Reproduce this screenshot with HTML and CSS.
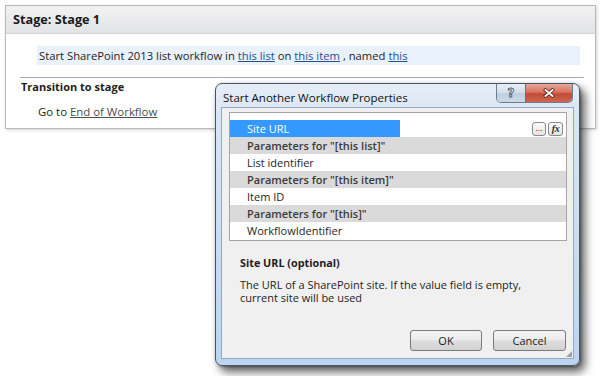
FILE: index.html
```html
<!DOCTYPE html>
<html>
<head>
<meta charset="utf-8">
<link rel="stylesheet" href="styles.css">
</head>
<body>
<div class="stage">
  <div class="stage-head">Stage: Stage 1</div>
  <div class="stage-body">
    <div class="action">Start SharePoint 2013 list workflow in <span class="link">this list</span> on <span class="link">this item</span> , named <span class="link">this</span></div>
    <div class="sep"></div>
    <div class="trans-title">Transition to stage</div>
    <div class="goto">Go to <span class="link gray">End of Workflow</span></div>
  </div>
</div>

<div class="dialog">
  <div class="titlebar">
    <span class="title">Start Another Workflow Properties</span>
    <div class="capbtns">
      <div class="cap help">?</div>
      <div class="cap close">
        <svg width="14" height="10" viewBox="0 0 14 10">
          <path d="M3.5 2 L10.5 8 M10.5 2 L3.5 8" stroke="#6a2a1e" stroke-width="3.6" stroke-linecap="square" fill="none"/>
          <path d="M3.5 2 L10.5 8 M10.5 2 L3.5 8" stroke="#ffffff" stroke-width="1.8" stroke-linecap="square" fill="none"/>
        </svg>
      </div>
    </div>
  </div>
  <div class="client">
    <div class="grid">
      <div class="row selrow">
        <div class="name sel">Site URL</div>
        <div class="value">
          <span class="mini">...</span>
          <span class="mini fx">fx</span>
        </div>
      </div>
      <div class="row group">Parameters for "[this list]"</div>
      <div class="row">List identifier</div>
      <div class="row group">Parameters for "[this item]"</div>
      <div class="row">Item ID</div>
      <div class="row group">Parameters for "[this]"</div>
      <div class="row">WorkflowIdentifier</div>
    </div>
    <div class="help-title">Site URL (optional)</div>
    <div class="help-text">
      <div class="line">The URL of a SharePoint site. If the value field is empty,</div>
      <div class="line">current site will be used</div>
    </div>
    <div class="buttons">
      <div class="btn ok">OK</div>
      <div class="btn cancel">Cancel</div>
    </div>
    <div class="grip"></div>
  </div>
</div>
</body>
</html>
```

FILE: styles.css
```css
* { box-sizing: border-box; }
html, body { margin: 0; padding: 0; }
body {
  width: 602px;
  height: 376px;
  background: #ffffff;
  position: relative;
  overflow: hidden;
  font-family: "Open Sans", "Noto Sans", sans-serif;
  font-size: 11px;
  color: #1e1e1e;
}

/* ---------- Stage card ---------- */
.stage {
  margin: 5px 0 0 5px;
  width: 591px;
  height: 124px;
  border: 1px solid #b9b9b9;
  box-shadow: 1px 1px 3px rgba(0,0,0,0.18);
  background: #fff;
}
.stage-head {
  height: 28px;
  background: linear-gradient(#f2f2f3, #e2e3e5);
  border-bottom: 1px solid #d3d4d6;
  font-weight: bold;
  font-size: 12.7px;
  line-height: 27px;
  padding-left: 7px;
  color: #1a1a1a;
}
.stage-body {
  padding: 12px 0 0 0;
}
.action {
  margin-left: 31px;
  width: 543px;
  height: 19px;
  line-height: 19px;
  padding-left: 2px;
  background: #e9f1fb;
  font-size: 11.25px;
}
.link {
  color: #25508e;
  text-decoration: underline;
}
.link.gray { color: #4d4d4d; }
.sep {
  margin: 12px 0 0 14px;
  width: 564px;
  height: 1px;
  background: #a9a9a9;
}
.trans-title {
  margin: 1px 0 0 15px;
  font-weight: bold;
  line-height: 16px;
}
.goto {
  margin: 9px 0 0 32px;
  line-height: 16px;
  font-size: 11.4px;
}

/* ---------- Dialog ---------- */
.dialog {
  position: absolute;
  left: 215px;
  top: 83px;
  width: 365px;
  height: 283px;
  border: 1px solid #45566b;
  border-radius: 7px;
  background: linear-gradient(#e6eef7 0px, #d9e6f3 30px, #bcd5ee 100%);
  box-shadow: 5px 6px 10px rgba(0,0,0,0.62), 1px 1px 3px rgba(0,0,0,0.35);
  padding: 0 5px 6px 5px;
  display: flex;
  flex-direction: column;
}
.titlebar {
  height: 23px;
  position: relative;
  display: flex;
  align-items: center;
}
.title {
  margin-left: 2px;
  margin-top: 3px;
  font-size: 11.5px;
  color: #111;
}
.capbtns {
  position: absolute;
  right: 1px;
  top: 0;
  display: flex;
  height: 19px;
  border: 1px solid #6b7c92;
  border-top: none;
  border-radius: 0 0 5px 5px;
  overflow: hidden;
}
.cap {
  height: 18px;
  display: flex;
  align-items: center;
  justify-content: center;
}
.help {
  width: 29px;
  background: linear-gradient(#e6edf5 0%, #d6e0eb 45%, #c0cee0 55%, #cad8e7 100%);
  border-right: 1px solid #7c6a6a;
  font-weight: bold;
  font-size: 12px;
  color: #e4ebf3;
  -webkit-text-stroke: 0.8px #4a5a6f;
  font-family: "DejaVu Sans", sans-serif;
}
.close {
  width: 46px;
  background: linear-gradient(#e9a797 0%, #d8735f 45%, #c44a34 55%, #d06650 100%);
}
.client {
  flex: 1;
  background: #f0f0f0;
  border: 1px solid #93a9c2;
  position: relative;
  padding: 4px 0 0 7px;
}
.grid {
  width: 338px;
  height: 129px;
  border: 1px solid #a5a5a5;
  background: #fff;
  padding-top: 7px;
}
.row {
  height: 17px;
  line-height: 17px;
  padding-left: 17px;
  font-size: 11px;
}
.row.group {
  background: #dadada;
  font-weight: 600;
  color: #3a3a3a;
}
.row.selrow {
  padding-left: 0;
  display: flex;
}
.name.sel {
  width: 170px;
  background: #3399ff;
  color: #fff;
  padding-left: 17px;
}
.value {
  flex: 1;
  display: flex;
  justify-content: flex-end;
  align-items: center;
  gap: 2px;
  padding-right: 3px;
}
.mini {
  width: 14px;
  height: 14px;
  border: 1px solid #8a8a8a;
  border-radius: 3px;
  background: linear-gradient(#fbfbfb, #e4e4e4);
  font-size: 9px;
  line-height: 10px;
  text-align: center;
  color: #333;
}
.mini.fx {
  width: 15px;
  font-family: "Liberation Serif", serif;
  font-style: italic;
  font-weight: bold;
  font-size: 10px;
  line-height: 12px;
  letter-spacing: -0.5px;
}
.help-title {
  margin: 14px 0 0 11px;
  font-weight: bold;
  font-size: 10.8px;
  line-height: 15px;
}
.help-text {
  margin: 8px 0 0 11px;
}
.line {
  height: 13px;
  line-height: 13px;
}
.buttons {
  margin-top: 26px;
  display: flex;
  justify-content: flex-end;
  gap: 11px;
  padding-right: 7px;
}
.btn {
  height: 21px;
  border: 1px solid #7a7a7a;
  border-radius: 3px;
  background: linear-gradient(#f4f4f4 0%, #ebebeb 48%, #dddddd 52%, #d2d2d2 100%);
  text-align: center;
  line-height: 19px;
}
.btn.ok { width: 72px; }
.btn.cancel { width: 73px; }
.grip {
  position: absolute;
  right: 1px;
  bottom: 1px;
  width: 6px;
  height: 6px;
  background:
    radial-gradient(circle, #a0a0a0 0.8px, transparent 1px) 0 0 / 2px 2px;
  clip-path: polygon(100% 0, 100% 100%, 0 100%);
}
```
